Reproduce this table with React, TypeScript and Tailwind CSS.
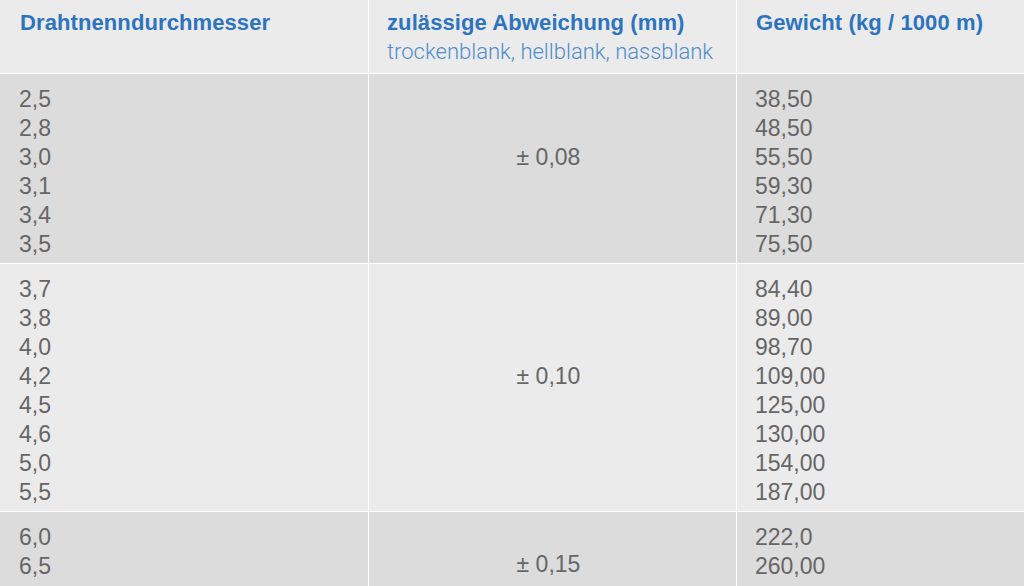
import React from "react";

const groups = [
  {
    bg: "bg-[#dbdcdb]",
    d: ["2,5", "2,8", "3,0", "3,1", "3,4", "3,5"],
    tol: "± 0,08",
    w: ["38,50", "48,50", "55,50", "59,30", "71,30", "75,50"],
    h: "",
  },
  {
    bg: "bg-[#ebebeb]",
    d: ["3,7", "3,8", "4,0", "4,2", "4,5", "4,6", "5,0", "5,5"],
    tol: "± 0,10",
    w: ["84,40", "89,00", "98,70", "109,00", "125,00", "130,00", "154,00", "187,00"],
    h: "",
  },
  {
    bg: "bg-[#dbdcdb]",
    d: ["6,0", "6,5"],
    tol: "± 0,15",
    w: ["222,0", "260,00"],
    h: "min-h-[127px]",
  },
];

const body = "font-['Liberation_Sans',sans-serif] font-normal text-[23px] leading-[29px] text-[#666666]";
const head = "font-['Liberation_Sans',sans-serif] font-bold text-[22px] leading-[29px] text-[#2d74c0] tracking-[0.1px]";

export default function App() {
  return (
    <div className="w-[1024px] h-[586px] overflow-hidden bg-white">
      <div className="grid grid-cols-[368px_367px_1fr] gap-x-px gap-y-px bg-white">
        <div className="bg-[#ebebeb] h-[73px] pl-[20px] pt-[8px]">
          <div className={head}>Drahtnenndurchmesser</div>
        </div>
        <div className="bg-[#ebebeb] h-[73px] pl-[18px] pt-[8px]">
          <div className={head}>zulässige Abweichung (mm)</div>
          <div className="font-['Roboto',sans-serif] font-light text-[22px] leading-[30px] text-[#4f8dce]">
            trockenblank, hellblank, nassblank
          </div>
        </div>
        <div className="bg-[#ebebeb] h-[73px] pl-[19px] pt-[8px]">
          <div className={head}>Gewicht (kg / 1000 m)</div>
        </div>
        {groups.map((g, i) => (
          <React.Fragment key={i}>
            <div className={`${g.bg} ${g.h} pl-[19px] pt-[11px] pb-[4px] ${body}`}>
              {g.d.map((v) => (
                <div key={v}>{v}</div>
              ))}
            </div>
            <div className={`${g.bg} ${g.h} flex items-center justify-center pb-[22px] pr-[8px] ${body}`}>
              {g.tol}
            </div>
            <div className={`${g.bg} ${g.h} pl-[18px] pt-[11px] pb-[4px] ${body}`}>
              {g.w.map((v) => (
                <div key={v}>{v}</div>
              ))}
            </div>
          </React.Fragment>
        ))}
      </div>
    </div>
  );
}
